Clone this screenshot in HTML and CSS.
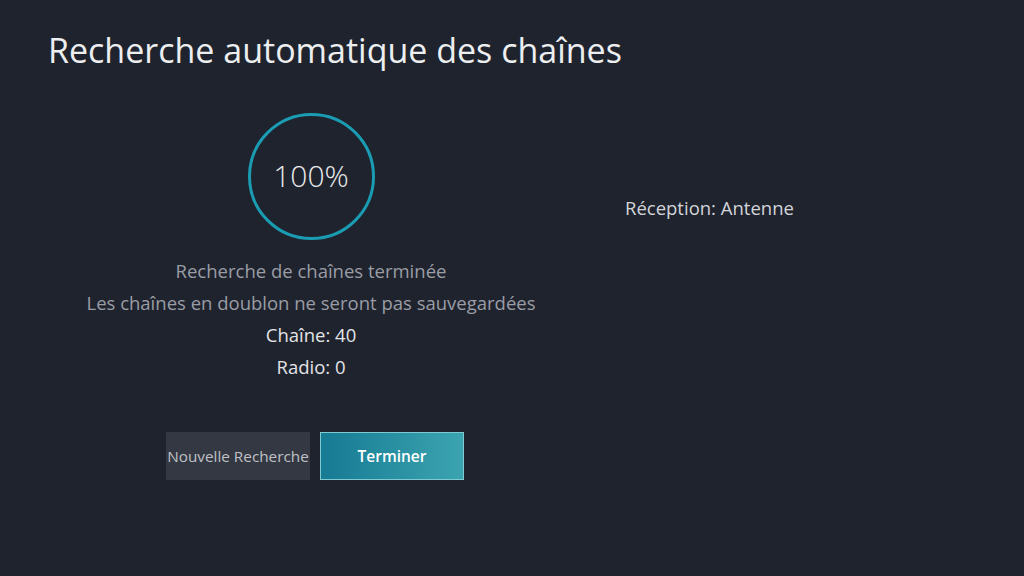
FILE: index.html
```html
<!DOCTYPE html>
<html lang="fr">
<head>
<meta charset="utf-8">
<link rel="stylesheet" href="styles.css">
</head>
<body>
<div class="screen">
  <h1 class="title">Recherche automatique des chaînes</h1>
  <div class="main">
    <div class="left">
      <div class="ring"><span class="pct">100%</span></div>
      <div class="info">
        <p class="muted">Recherche de chaînes terminée</p>
        <p class="muted">Les chaînes en doublon ne seront pas sauvegardées</p>
        <p class="bright">Chaîne: 40</p>
        <p class="bright">Radio: 0</p>
      </div>
      <div class="buttons">
        <div class="btn btn-secondary">Nouvelle Recherche</div>
        <div class="btn btn-primary">Terminer</div>
      </div>
    </div>
    <div class="right">
      <p class="reception">Réception: Antenne</p>
    </div>
  </div>
</div>
</body>
</html>
```
FILE: styles.css
```css
* { box-sizing: border-box; }
html, body { margin: 0; padding: 0; }
body {
  background: #1f232e;
  font-family: "Open Sans", "Noto Sans", sans-serif;
  color: #e6e7ea;
  width: 1024px;
  height: 576px;
  overflow: hidden;
}
.screen { padding: 28px 0 0 48px; }
.title {
  margin: 0;
  font-size: 34px;
  font-weight: 500;
  line-height: 44px;
  color: #eceef0;
}
.main { display: flex; margin-top: 41px; }
.left {
  width: 622px;
  margin-left: -48px;
  display: flex;
  flex-direction: column;
  align-items: center;
}
.ring {
  width: 127px;
  height: 127px;
  border: 3px solid #1a9cb2;
  border-radius: 50%;
  display: flex;
  align-items: center;
  justify-content: center;
  padding-bottom: 3px;
}
.pct { font-size: 30px; font-weight: 300; color: #e8e9eb; }
.info { margin-top: 15px; text-align: center; }
.info p { margin: 0; font-size: 18.5px; line-height: 32px; }
.muted { color: #9a9da5; }
.bright { color: #e3e4e7; }
.buttons { display: flex; gap: 10px; margin-top: 49px; margin-left: 8px; }
.btn {
  width: 144px;
  height: 48px;
  display: flex;
  align-items: center;
  justify-content: center;
  font-size: 15.3px;
  white-space: nowrap;
}
.btn-secondary { background: #343842; color: #bfc1c6; }
.btn-primary {
  background: linear-gradient(90deg, #167a93, #3ba4b0);
  border: 1px solid #7fc9d2;
  color: #ffffff;
  font-weight: 600;
  font-size: 15.5px;
}
.right { padding-top: 83px; margin-left: 3px; }
.reception { margin: 0; font-size: 18.5px; line-height: 24px; color: #d3d5d9; }
```
